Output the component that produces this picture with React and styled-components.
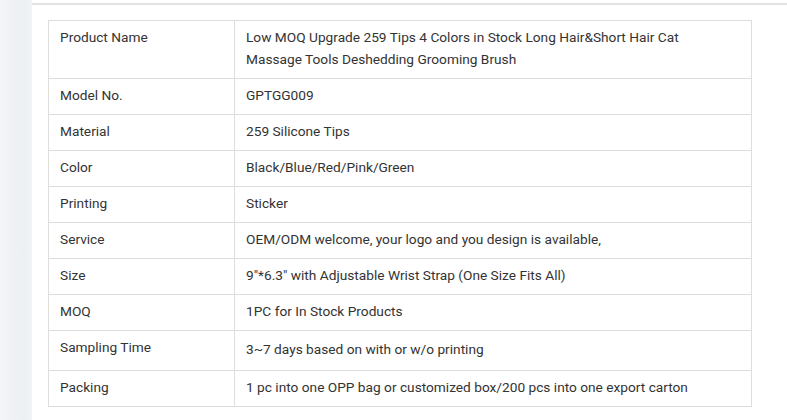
import styled, { createGlobalStyle } from 'styled-components';

const GlobalStyle = createGlobalStyle`
  html, body {
    margin: 0;
    padding: 0;
    background: #ffffff;
    font-family: Roboto, "Liberation Sans", Arial, sans-serif;
  }
`;

const rows = [
  {
    label: 'Product Name',
    value: 'Low MOQ Upgrade 259 Tips 4 Colors in Stock Long Hair&Short Hair Cat Massage Tools Deshedding Grooming Brush',
  },
  { label: 'Model No.', value: 'GPTGG009' },
  { label: 'Material', value: '259 Silicone Tips' },
  { label: 'Color', value: 'Black/Blue/Red/Pink/Green' },
  { label: 'Printing', value: 'Sticker' },
  { label: 'Service', value: 'OEM/ODM welcome, your logo and you design is available,' },
  { label: 'Size', value: '9"*6.3" with Adjustable Wrist Strap (One Size Fits All)' },
  { label: 'MOQ', value: '1PC for In Stock Products' },
  { label: 'Sampling Time', value: '3~7 days based on with or w/o printing', lower: true },
  { label: 'Packing', value: '1 pc into one OPP bag or customized box/200 pcs into one export carton' },
];

function App() {
  return (
    <>
      <GlobalStyle />
      <Page>
        <SideStrip />
        <Card>
          <Table>
            <tbody>
              {rows.map((r) => (
                <tr key={r.label}>
                  <LabelCell>{r.label}</LabelCell>
                  <ValueCell $lower={r.lower}>{r.value}</ValueCell>
                </tr>
              ))}
            </tbody>
          </Table>
        </Card>
      </Page>
    </>
  );
}

const Page = styled.div`
  display: flex;
  width: 787px;
  height: 420px;
  overflow: hidden;
`;

const SideStrip = styled.div`
  width: 32px;
  flex-shrink: 0;
  background: linear-gradient(to right, #f3f5f8, #eceff3 70%, #f1f3f6);
`;

const Card = styled.div`
  flex: 1;
  background: #ffffff;
  border-top: 2px solid #e2e2e2;
  margin-top: 3px;
  padding: 15px 0 0 16px;
`;

const Table = styled.table`
  width: 704px;
  border-collapse: collapse;
  color: #333333;
  font-size: 13.7px;
  line-height: 22px;
`;

const LabelCell = styled.td`
  width: 163px;
  border: 1px solid #dddddd;
  padding: 5px 11px 8px;
  vertical-align: top;
`;

const ValueCell = styled.td`
  border: 1px solid #dddddd;
  padding: ${(p) => (p.$lower ? '7px 20px 10px 11px' : '5px 20px 8px 11px')};
  vertical-align: top;
`;

export default App;
